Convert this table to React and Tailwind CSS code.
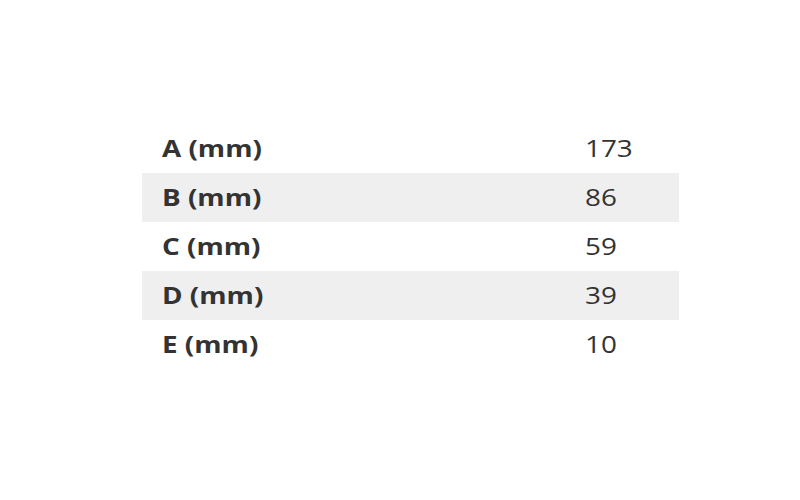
const ROWS = [
  { label: "A (mm)", value: "173" },
  { label: "B (mm)", value: "86" },
  { label: "C (mm)", value: "59" },
  { label: "D (mm)", value: "39" },
  { label: "E (mm)", value: "10" },
];

export default function App() {
  return (
    <div
      className="w-[800px] h-[500px] bg-white flex flex-col items-start pt-[124px] pl-[142px]"
      style={{ fontFamily: '"Open Sans", "Liberation Sans", sans-serif' }}
    >
      <div className="w-[537px] flex flex-col">
        {ROWS.map((row, idx) => (
          <div
            key={row.label}
            className={
              "flex h-[49px] items-center text-[23px] leading-none text-[#333333] " +
              (idx % 2 === 1 ? "bg-[#efefef]" : "bg-white")
            }
          >
            <div className="w-[443px] pl-[20px] font-bold">
              <span className="inline-block origin-left scale-x-[1.21]">{row.label}</span>
            </div>
            <div className="flex-1">
              <span className="inline-block origin-left scale-x-[1.21]">{row.value}</span>
            </div>
          </div>
        ))}
      </div>
    </div>
  );
}
